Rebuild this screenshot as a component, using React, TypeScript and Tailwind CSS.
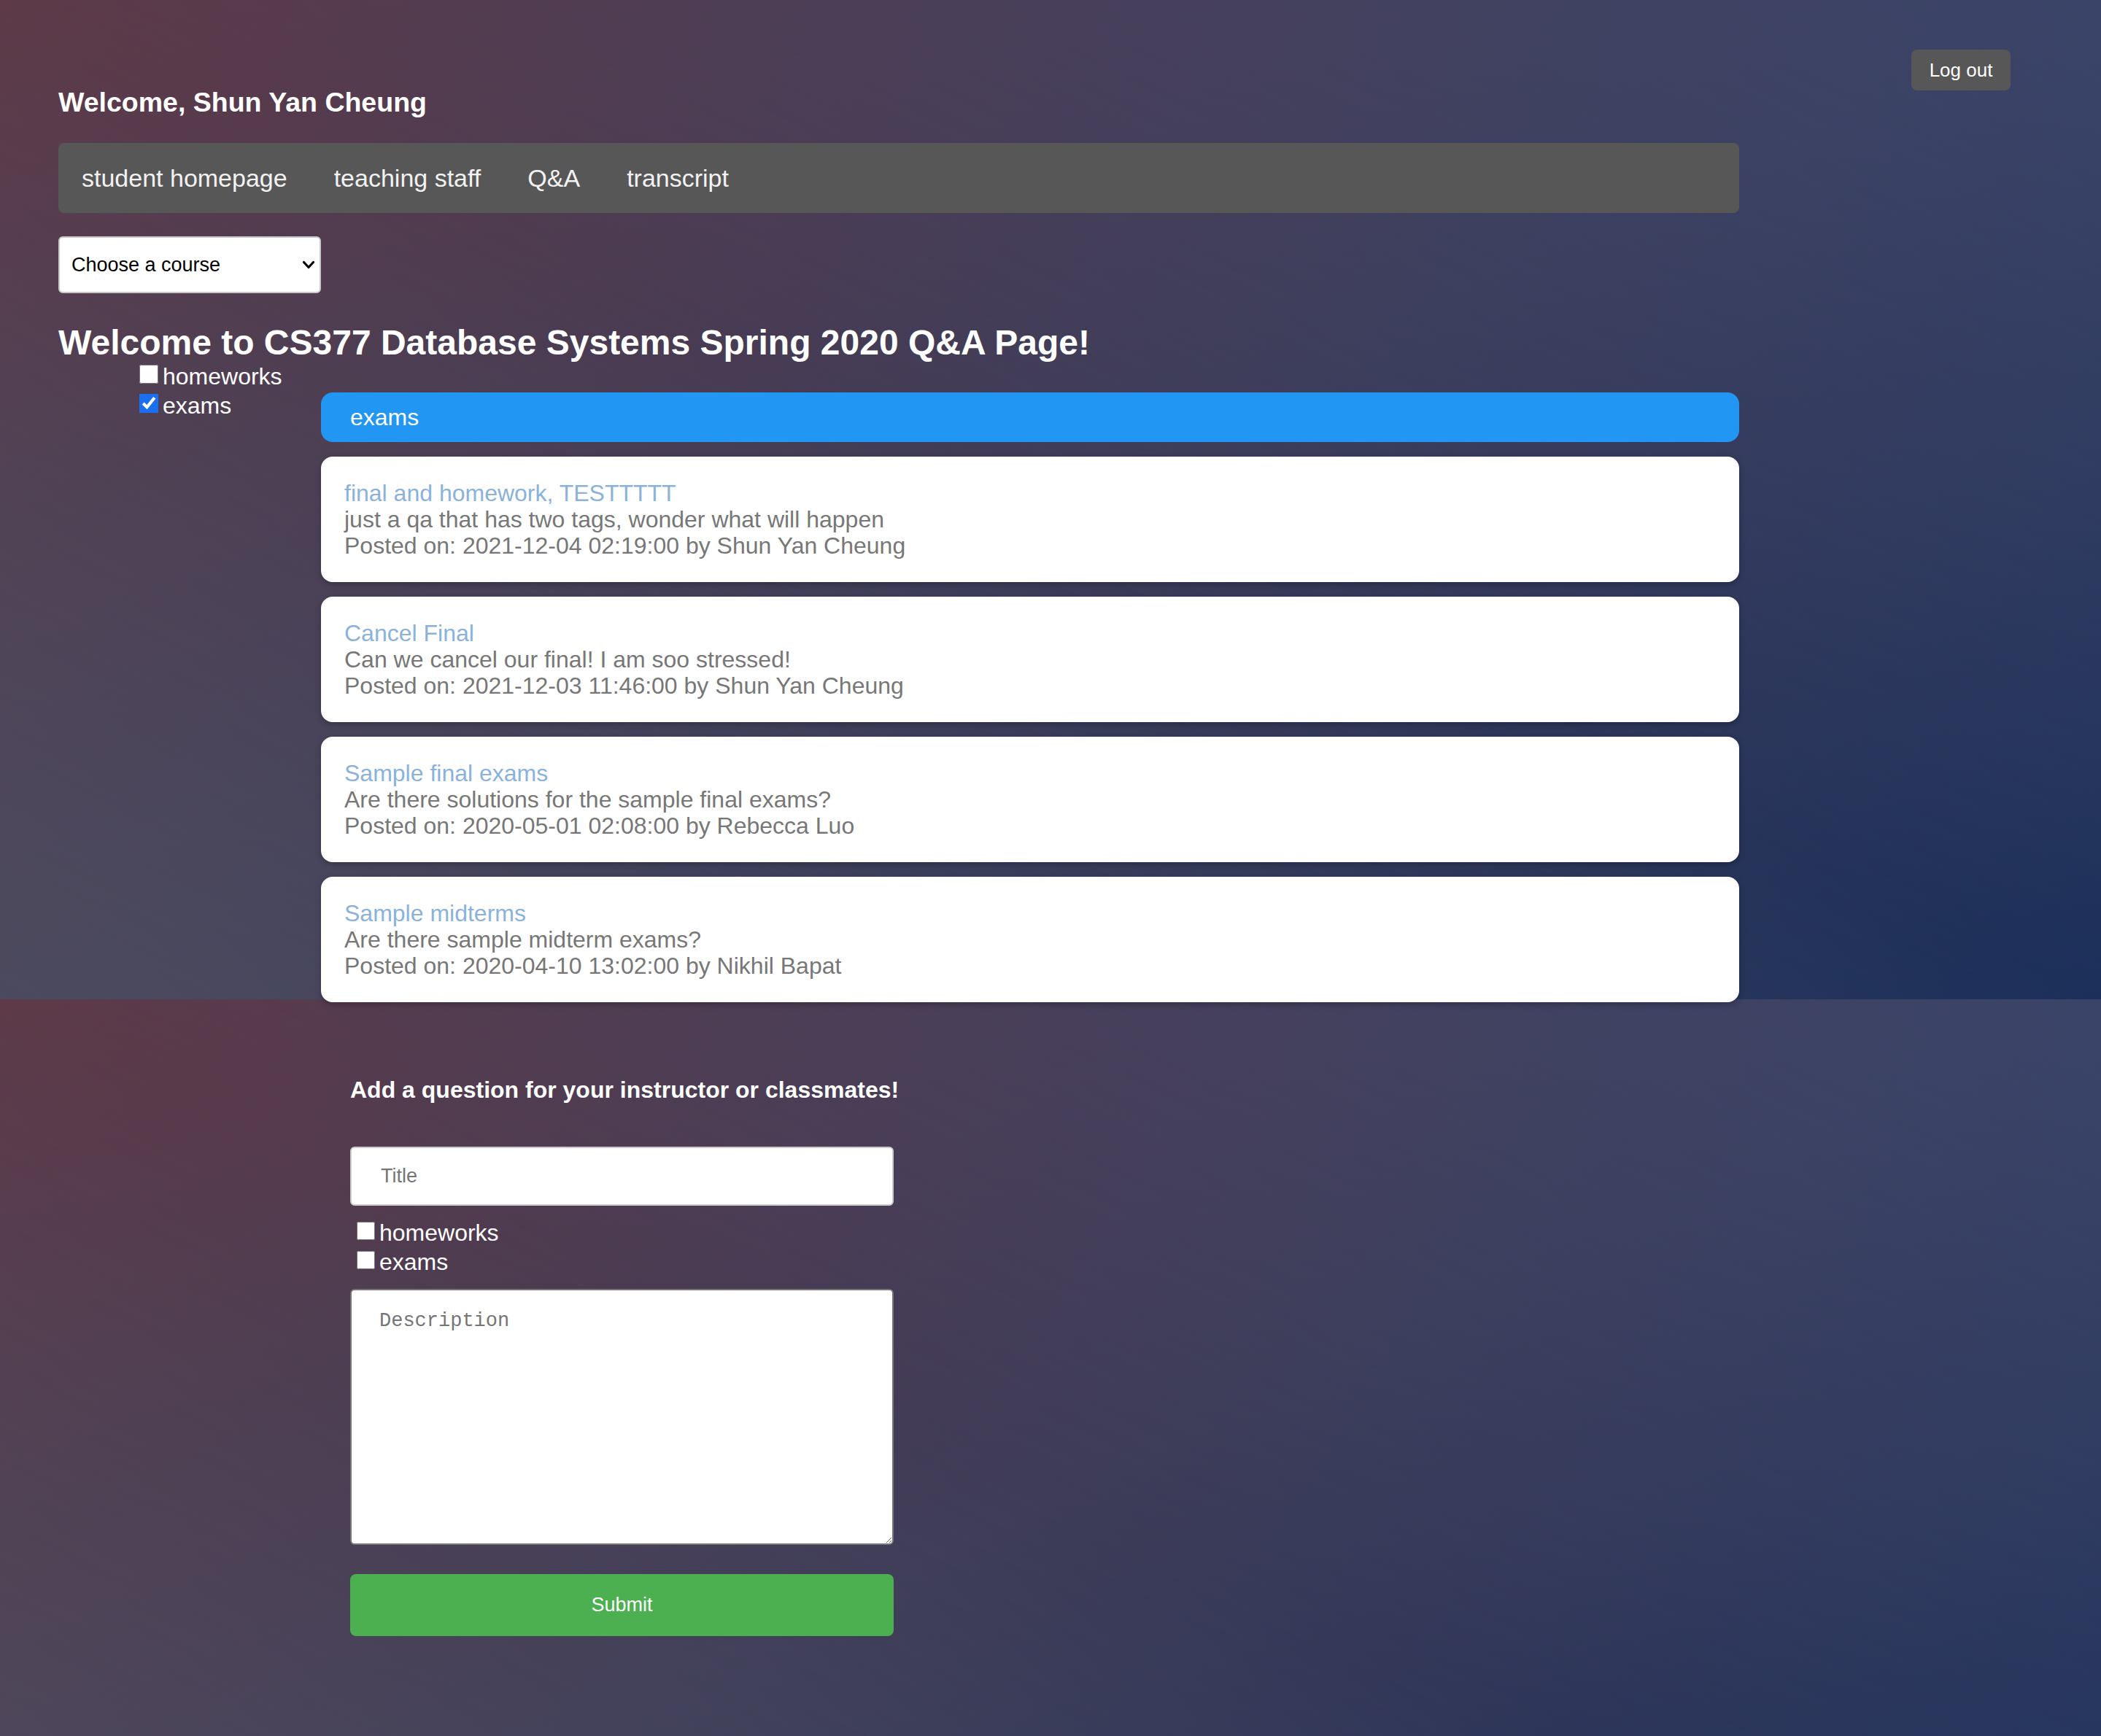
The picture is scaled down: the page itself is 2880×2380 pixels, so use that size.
import { useState } from "react";

type Post = {
  title: string;
  body: string;
  postedOn: string;
  author: string;
};

const NAV_LINKS = ["student homepage", "teaching staff", "Q&A", "transcript"];
const TAGS = ["homeworks", "exams"];

const POSTS: Post[] = [
  {
    title: "final and homework, TESTTTTT",
    body: "just a qa that has two tags, wonder what will happen",
    postedOn: "2021-12-04 02:19:00",
    author: "Shun Yan Cheung",
  },
  {
    title: "Cancel Final",
    body: "Can we cancel our final! I am soo stressed!",
    postedOn: "2021-12-03 11:46:00",
    author: "Shun Yan Cheung",
  },
  {
    title: "Sample final exams",
    body: "Are there solutions for the sample final exams?",
    postedOn: "2020-05-01 02:08:00",
    author: "Rebecca Luo",
  },
  {
    title: "Sample midterms",
    body: "Are there sample midterm exams?",
    postedOn: "2020-04-10 13:02:00",
    author: "Nikhil Bapat",
  },
];

function PostCard({ post }: { post: Post }) {
  return (
    <div className="rounded-[16px] bg-white px-[32px] py-[32px] text-[32px] leading-[36px] shadow-[0_3px_8px_rgba(0,0,0,0.25)]">
      <a href="#" className="block text-[#8ab2db]">
        {post.title}
      </a>
      <div className="text-[#777777]">{post.body}</div>
      <div className="text-[#777777]">
        Posted on: {post.postedOn} by {post.author}
      </div>
    </div>
  );
}

export default function App() {
  const [filters, setFilters] = useState<Record<string, boolean>>({ homeworks: false, exams: true });
  const [newTags, setNewTags] = useState<Record<string, boolean>>({ homeworks: false, exams: false });
  const [title, setTitle] = useState("");
  const [desc, setDesc] = useState("");

  const activeTags = TAGS.filter((t) => filters[t]);

  return (
    <div className="min-h-screen w-full bg-[image:linear-gradient(to_top_right,rgba(90,88,100,0.5)_0%,rgba(90,88,100,0)_50%,rgba(54,76,120,0)_50%,rgba(54,76,120,0.5)_100%),linear-gradient(to_bottom_right,#5e3a48_0%,#3e3c58_50%,#1b2f5a_100%)] bg-[length:100%_1370px] bg-repeat-y font-['Liberation_Sans',Arial,sans-serif] text-white">
      <div className="px-[80px] pt-[68px] pb-[120px]">
        {/* header */}
        <div className="flex items-start justify-between">
          <h3 className="mt-[51px] text-[37.5px] font-bold leading-[42px]">Welcome, Shun Yan Cheung</h3>
          <button className="mr-[44px] h-[56px] w-[136px] rounded-[8px] bg-[#575757] text-[26px] text-white">
            Log out
          </button>
        </div>

        <nav className="mt-[35px] flex h-[96px] w-[2304px] items-center rounded-[8px] bg-[#575757]">
          {NAV_LINKS.map((l) => (
            <a key={l} href="#" className="px-[32px] text-[34px] text-[#f2f2f2]">
              {l}
            </a>
          ))}
        </nav>

        <div className="relative mt-[32px] w-[360px]">
          <select className="h-[78px] w-full appearance-none rounded-[6px] border-2 border-[#c8c8c8] bg-white pl-[16px] text-[27px] text-black outline-none">
            <option>Choose a course</option>
            <option>CS377 Database Systems Spring 2020</option>
          </select>
          <svg
            className="pointer-events-none absolute right-[8px] top-[33px]"
            width="18"
            height="12"
            viewBox="0 0 18 12"
            fill="none"
          >
            <path d="M2.5 2.5l6.5 7 6.5-7" stroke="#000" strokeWidth="3.2" strokeLinecap="round" strokeLinejoin="round" />
          </svg>
        </div>

        <h2 className="mt-[40px] text-[48px] font-bold leading-[55px]">
          Welcome to CS377 Database Systems Spring 2020 Q&amp;A Page!
        </h2>

        <div className="flex">
          {/* tag filters */}
          <div className="w-[360px] pl-[111px]">
            {TAGS.map((t) => (
              <label key={t} className="flex h-[40px] items-start">
                <input
                  type="checkbox"
                  checked={filters[t]}
                  onChange={(e) => setFilters((s) => ({ ...s, [t]: e.target.checked }))}
                  className="m-0 mt-[3px] h-[26px] w-[26px] accent-[#1a6ff0]"
                />
                <span className="ml-[6px] text-[32px] leading-[38px]">{t}</span>
              </label>
            ))}
          </div>

          {/* posts */}
          <div className="w-[1944px] pt-[41px]">
            {activeTags.map((t) => (
              <div key={t} className="flex h-[68px] items-center rounded-[16px] bg-[#2196f3] px-[40px] text-[32px]">
                {t}
              </div>
            ))}
            <div className="mt-[20px] flex flex-col gap-[20px]">
              {POSTS.map((p) => (
                <PostCard key={p.title} post={p} />
              ))}
            </div>
          </div>
        </div>

        {/* new question */}
        <form className="ml-[400px] mt-[102px] w-[745px]" onSubmit={(e) => e.preventDefault()}>
          <h4 className="whitespace-nowrap text-[32px] font-bold leading-[37px]">
            Add a question for your instructor or classmates!
          </h4>
          <input
            value={title}
            onChange={(e) => setTitle(e.target.value)}
            placeholder="Title"
            className="mt-[59px] block h-[81px] w-full rounded-[6px] border-2 border-[#cccccc] bg-white px-[40px] text-[27px] text-black outline-none placeholder:text-[#757575]"
          />
          <div className="mt-[18px]">
            {TAGS.map((t) => (
              <label key={t} className="flex h-[40px] items-start">
                <input
                  type="checkbox"
                  checked={newTags[t]}
                  onChange={(e) => setNewTags((s) => ({ ...s, [t]: e.target.checked }))}
                  className="m-0 ml-[9px] mt-[4px] h-[25px] w-[25px] accent-[#1a6ff0]"
                />
                <span className="ml-[6px] text-[32px] leading-[38px]">{t}</span>
              </label>
            ))}
          </div>
          <textarea
            value={desc}
            onChange={(e) => setDesc(e.target.value)}
            placeholder="Description"
            className="mt-[16px] block h-[351px] w-full rounded-[6px] border-2 border-[#767676] bg-white px-[38px] pt-[22px] font-['Liberation_Mono',monospace] text-[27px] text-black outline-none placeholder:text-[#757575]"
          />
          <button
            type="submit"
            className="mt-[40px] block h-[85px] w-full rounded-[8px] bg-[#4caf50] text-[27px] text-white"
          >
            Submit
          </button>
        </form>
      </div>
    </div>
  );
}
